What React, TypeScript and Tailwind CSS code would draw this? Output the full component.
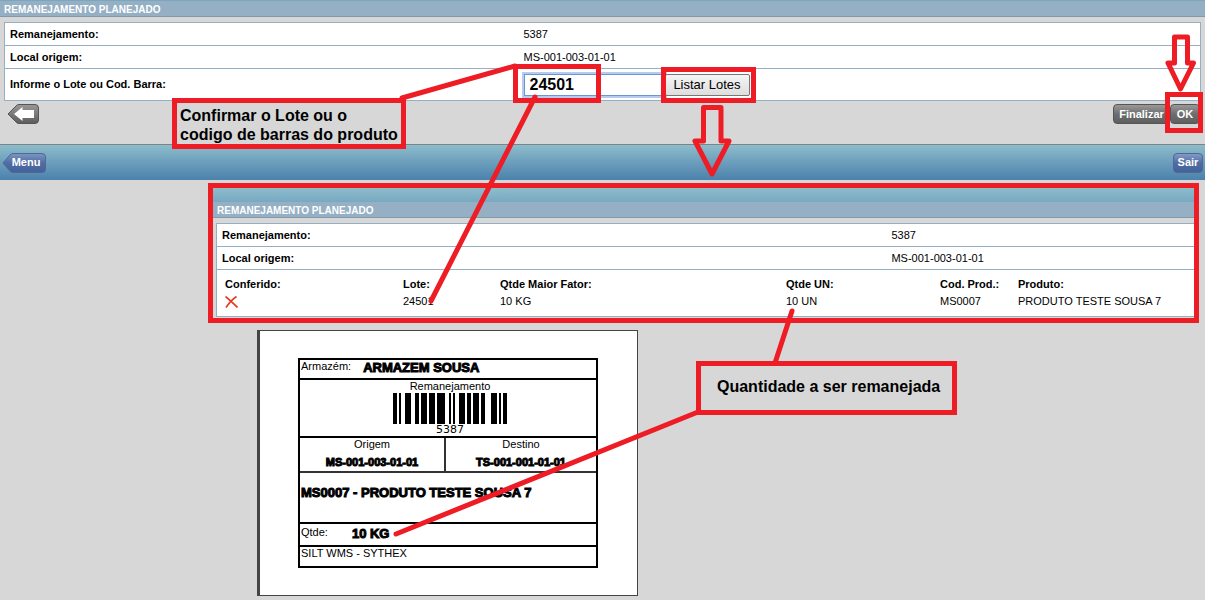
import React from 'react';

const barcodeBars = [
  [0, 4], [6, 2], [12, 6], [22, 4], [28, 6], [36, 6], [44, 8],
  [56, 2], [60, 2], [66, 6], [74, 4], [80, 6], [88, 4], [98, 6], [106, 2], [110, 4],
];

const greyButton =
  'h-5 rounded border border-[#555] bg-linear-to-b from-[#999] via-[#6e6e6e] to-[#5f5f5f] text-[11px] font-bold text-white';
const blueButton =
  'h-5 rounded border border-[#51688f] bg-linear-to-b from-[#839ac5] via-[#4f6ca5] to-[#45619a] text-[11px] font-bold text-white';

const TitleBar = () => (
  <h2 className="h-4 border-b border-[#8299ab] bg-[#95b0c4] px-1 text-[10px] leading-[17px] font-bold text-white">
    REMANEJAMENTO PLANEJADO
  </h2>
);

interface FieldProps {
  label: string;
  value: string;
  columns: string;
}

const Field = ({ label, value, columns }: FieldProps) => (
  <div className={`grid h-[23px] items-center border-b border-[#95b0c4] px-[5px] ${columns}`}>
    <dt className="font-bold">{label}</dt>
    <dd>{value}</dd>
  </div>
);

const DownArrow = ({ className }: { className: string }) => (
  <svg
    className={className}
    width="40"
    height="74"
    viewBox="0 0 40 74"
    fill="none"
    stroke="#ee1c24"
    strokeWidth="5"
    strokeLinejoin="round"
    aria-hidden="true"
  >
    <path d="M11.500 3.500H29V37H37L20 70L3 37H11.500Z" />
  </svg>
);

const LotTable = () => (
  <table className="mt-[5px] ml-[5px] table-fixed text-left">
    <colgroup>
      <col className="w-[178px]" />
      <col className="w-[97px]" />
      <col className="w-[286px]" />
      <col className="w-[154px]" />
      <col className="w-[78px]" />
      <col className="w-[170px]" />
    </colgroup>
    <thead>
      <tr className="h-[17px]">
        <th className="pl-[3px]">Conferido:</th>
        <th className="pl-[3px]">Lote:</th>
        <th className="pl-[3px]">Qtde Maior Fator:</th>
        <th className="pl-[3px]">Qtde UN:</th>
        <th className="pl-[3px]">Cod. Prod.:</th>
        <th className="pl-[3px]">Produto:</th>
      </tr>
    </thead>
    <tbody>
      <tr className="h-[17px]">
        <td className="pl-[3px]">
          <svg width="13" height="12" viewBox="0 0 13 12" fill="none" stroke="#e8351c" strokeWidth="1.6" role="img" aria-label="Não conferido">
            <path d="M.5 .5Q5 4 12.500 11.500M11.500 .5Q6 4 1 11.500" />
          </svg>
        </td>
        <td className="pl-[3px]">24501</td>
        <td className="pl-[3px]">10 KG</td>
        <td className="pl-[3px]">10 UN</td>
        <td className="pl-[3px]">MS0007</td>
        <td className="pl-[3px]">PRODUTO TESTE SOUSA 7</td>
      </tr>
    </tbody>
  </table>
);

const Barcode = () => (
  <svg width="114" height="31" viewBox="0 0 114 31" className="mx-auto mt-px block" role="img" aria-label="5387">
    {barcodeBars.map(([x, width]) => (
      <rect key={x} x={x} width={width} height="31" fill="#000" />
    ))}
  </svg>
);

const strongText = '[-webkit-text-stroke:1px_#000]';

const ShippingLabel = () => (
  <section className="ml-[257px] w-[381px] border border-l-3 border-[#444] bg-white pt-[27px] pr-[39px] pb-[27px] pl-[38px]">
    <div className="border-2 border-black text-[11px] leading-3">
      <div className="flex h-5 items-start border-b-2 border-black pl-px">
        <span>Armazém:</span>
        <strong className={`ml-3 text-[13px] leading-4 ${strongText}`}>ARMAZEM SOUSA</strong>
      </div>
      <div className="h-[58px] border-b-2 border-black pl-1 text-center">
        <div>Remanejamento</div>
        <Barcode />
        <div className="font-['DejaVu_Sans',sans-serif]">5387</div>
      </div>
      <div className="grid h-[35px] grid-cols-[73fr_75fr] border-b-2 border-[#333] text-center">
        <div className="border-r-2 border-[#333]">
          Origem
          <strong className={`mt-[6px] block ${strongText}`}>MS-001-003-01-01</strong>
        </div>
        <div>
          Destino
          <strong className={`mt-[6px] block ${strongText}`}>TS-001-001-01-01</strong>
        </div>
      </div>
      <div className="h-[51px] border-b-2 border-black pt-3 pl-px">
        <strong className={`text-[13px] leading-4 ${strongText}`}>MS0007 - PRODUTO TESTE SOUSA 7</strong>
      </div>
      <div className="flex h-[23px] items-start border-b-2 border-black pt-[2px] pl-px">
        <span>Qtde:</span>
        <strong className={`ml-6 text-[13px] leading-4 ${strongText}`}>10 KG</strong>
      </div>
      <div className="h-[19px] pl-px">SILT WMS - SYTHEX</div>
    </div>
  </section>
);

const App = () => {
  return (
    <main className="relative min-h-screen overflow-x-hidden bg-[#d7d7d7] font-['Liberation_Sans',Arial,sans-serif] text-[11px] leading-[13px] text-black">
      <div className="border-t border-[#7aa7bd]">
        <TitleBar />
      </div>

      <form onSubmit={(e) => e.preventDefault()}>
        <div className="mx-1 mt-[5px] border border-b-0 border-[#95b0c4] bg-white">
          <dl>
            <Field label="Remanejamento:" value="5387" columns="grid-cols-[13fr_17fr]" />
            <Field label="Local origem:" value="MS-001-003-01-01" columns="grid-cols-[13fr_17fr]" />
          </dl>
          <div className="grid h-8 grid-cols-[13fr_17fr] items-center border-b border-[#95b0c4] px-[5px]">
            <label htmlFor="lote" className="font-bold">Informe o Lote ou Cod. Barra:</label>
            <div className="flex items-center">
              <div className="relative">
                <input
                  id="lote"
                  defaultValue="24501"
                  className="block h-[22px] w-[141px] border border-[#6f94d6] bg-white px-[5px] text-[16px] font-bold outline-2 outline-[#b5cbf0]"
                />
                <span className="pointer-events-none absolute -top-[10px] -left-[11px] h-[39px] w-[88px] border-5 border-[#ee1c24]" />
              </div>
              <div className="relative">
                <button type="button" className="block h-[22px] w-[85px] rounded-xs border border-[#777] bg-linear-to-b from-[#f5f5f5] to-[#dedede] text-[13px]">
                  Listar Lotes
                </button>
                <span className="pointer-events-none absolute -top-[7px] -left-[4px] h-9 w-[95px] border-5 border-[#ee1c24]" />
                <DownArrow className="pointer-events-none absolute top-[30px] left-[27px]" />
              </div>
            </div>
          </div>
        </div>

        <div className="relative flex h-[43px] items-start justify-between pt-[3px] pr-[5px] pl-[7px]">
          <button type="button" aria-label="Voltar">
            <svg width="32" height="20" viewBox="0 0 32 20">
              <defs>
                <linearGradient id="back" x2="0" y2="1">
                  <stop stopColor="#999" />
                  <stop offset="1" stopColor="#5c5c5c" />
                </linearGradient>
              </defs>
              <path d="M1 10L9 2Q10 .5 12 .5H28Q31.500 .5 31.500 4V16Q31.500 19.500 28 19.500H12Q10 19.500 9 18Z" fill="url(#back)" stroke="#555" />
              <path d="M7 10L15.500 3V6H27V14H15.500V17Z" fill="#fff" />
            </svg>
          </button>
          <p className="absolute -top-[3px] left-[172px] z-10 border-5 border-[#ee1c24] bg-[#d7d7d7] px-[3px] pt-[3px] text-[16px] leading-[19px] font-bold">
            Confirmar o Lote ou o
            <br />
            codigo de barras do produto
          </p>
          <div className="flex">
            <button type="button" className={`${greyButton} w-[57px]`}>Finalizar</button>
            <div className="relative">
              <button type="submit" className={`${greyButton} block w-[30px]`}>OK</button>
              <span className="pointer-events-none absolute -top-3 -left-[5px] h-[41px] w-[38px] border-5 border-[#ee1c24]" />
              <svg className="pointer-events-none absolute -top-[71px] -left-[5px]" width="32" height="60" viewBox="0 0 32 60" fill="none" stroke="#ee1c24" strokeWidth="5" strokeLinejoin="round" aria-hidden="true">
                <path d="M9.500 4H22.500V30H28.500L15.500 56L3 30H9.500Z" />
              </svg>
            </div>
          </div>
        </div>
      </form>

      <nav className="flex h-9 items-center justify-between border-t border-[#7c8488] bg-linear-to-b from-[#8dbccb] to-[#4b81ac] pr-[2px] pl-[2px]">
        <button type="button" className="grid items-center">
          <svg className="col-start-1 row-start-1" width="44" height="20" viewBox="0 0 44 20">
            <defs>
              <linearGradient id="menu" x2="0" y2="1">
                <stop stopColor="#7d96c2" />
                <stop offset=".5" stopColor="#4f6ca5" />
                <stop offset="1" stopColor="#45619a" />
              </linearGradient>
            </defs>
            <path d="M1 10L8 2Q9 .5 11 .5H40Q43.500 .5 43.500 4V16Q43.500 19.500 40 19.500H11Q9 19.500 8 18Z" fill="url(#menu)" stroke="#51688f" />
          </svg>
          <span className="col-start-1 row-start-1 pl-1 font-bold text-white">Menu</span>
        </button>
        <button type="button" className={`${blueButton} w-[30px]`}>Sair</button>
      </nav>

      <section className="mt-[3px] mr-[6px] ml-[208px] border-5 border-[#ee1c24] pb-px">
        <div className="h-[14px] bg-linear-to-b from-[#8dbccb] to-[#78a9c1]" />
        <TitleBar />
        <div className="mt-[5px] ml-[3px] border-t border-l border-[#95b0c4] bg-white">
          <dl>
            <Field label="Remanejamento:" value="5387" columns="grid-cols-[9fr_4fr]" />
            <Field label="Local origem:" value="MS-001-003-01-01" columns="grid-cols-[9fr_4fr]" />
          </dl>
          <div className="h-[47px] border-b border-[#95b0c4] pt-px">
            <LotTable />
          </div>
        </div>
      </section>

      <div className="mt-[7px] flex items-start">
        <ShippingLabel />
        <p className="mt-[31px] ml-[58px] h-[54px] border-5 border-[#ee1c24] pt-[11px] pr-3 pl-4 text-[16px] leading-[19px] font-bold">
          Quantidade a ser remanejada
        </p>
      </div>

      {/* connector lines between the callouts and the fields */}
      <svg className="pointer-events-none absolute top-0 left-0 z-20" width="1205" height="600" fill="none" stroke="#ee1c24" strokeWidth="5" strokeLinecap="round" aria-hidden="true">
        <path d="M402 98L515 66" />
        <path d="M535 97L431 301" />
        <path d="M792 311L775 363" />
        <path d="M698 412L396 534" />
      </svg>
    </main>
  );
};

export default App;
